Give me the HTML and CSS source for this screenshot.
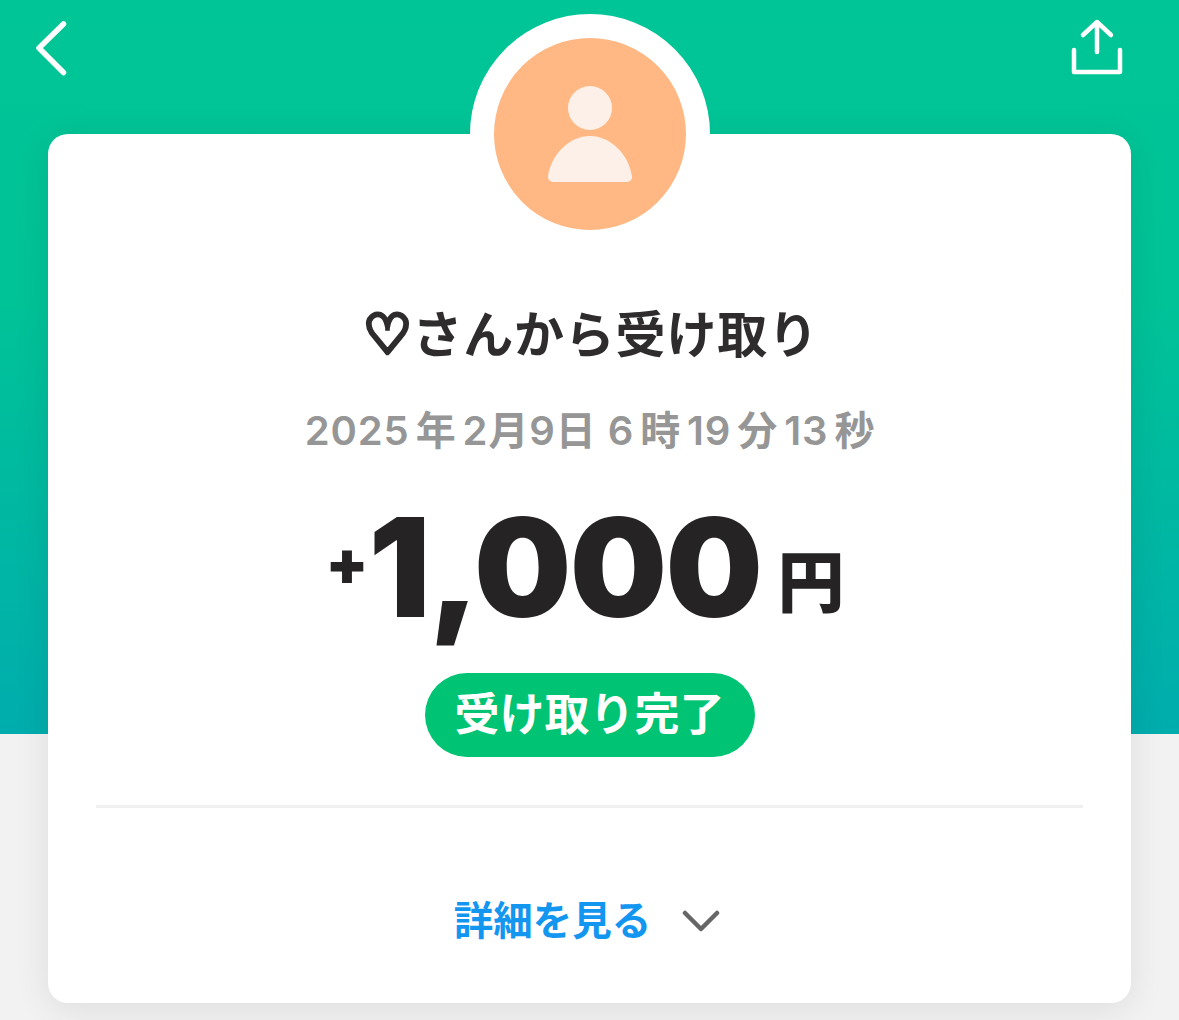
FILE: index.html
```html
<!DOCTYPE html>
<html lang="ja">

<head>
    <meta charset="utf-8">
    <title>受け取り</title>
    <link rel="stylesheet" href="styles.css">
</head>

<body>
    <div class="topbar">
        <svg class="back-icon" viewBox="0 0 36 60">
            <path d="M29.5 6 L5 30 L29.5 54.5" />
        </svg>
        <svg class="share-icon" viewBox="0 0 54 58">
            <path d="M27 34 V4 M13 17 L27 4 L41 17" />
            <path d="M4 32 V54 H50 V32" />
        </svg>
    </div>

    <div class="card">
        <div class="avatar">
            <svg class="avatar-person" viewBox="0 0 192 192">
                <circle cx="96" cy="70" r="22" />
                <path d="M59 144 H133 A5 5 0 0 0 138 138.5 C135 117 117 98 96 98 S57 117 54 138.5 A5 5 0 0 0 59 144 Z" />
            </svg>
        </div>

        <h2 class="title"><span class="heart">♡</span>さんから受け取り</h2>
        <p class="date">2025<span class="unit">年</span>2月9日 6<span class="unit">時</span>19<span class="unit">分</span>13<span class="unit">秒</span></p>

        <div class="amount"><span class="plus">+</span><span class="number">1,000</span><span class="yen">円</span></div>

        <div class="status">受け取り完了</div>
        <div class="divider"></div>

        <div class="details">
            <span class="details-text">詳細を見る</span>
            <svg class="details-icon" viewBox="0 0 38 22">
                <path d="M3 3 L19 19 L35 3" />
            </svg>
        </div>
    </div>
</body>

</html>
```
FILE: styles.css
```css
html,
body {
    margin: 0;
    height: 1020px;
    overflow: hidden;
}

body {
    background-color: #f2f2f2;
    background-image: linear-gradient(#00c596 0, #00c397 40%, #00adad 100%);
    background-size: 100% 734px;
    background-repeat: no-repeat;
    font-family: Inter, "Noto Sans CJK JP", sans-serif;
    color: #252324;
}

.topbar {
    display: flex;
    justify-content: space-between;
    padding: 18px 55px 0 34px;
}

.back-icon {
    width: 36px;
    height: 60px;
}

.share-icon {
    width: 54px;
    height: 58px;
}

.back-icon path,
.share-icon path {
    fill: none;
    stroke: white;
    stroke-linecap: round;
    stroke-linejoin: round;
}

.back-icon path {
    stroke-width: 5.5;
}

.share-icon path {
    stroke-width: 4.5;
}

.card {
    position: relative;
    display: flex;
    flex-direction: column;
    align-items: center;
    box-sizing: border-box;
    width: 1083px;
    height: 869px;
    margin: 56px 0 0 48px;
    padding-top: 171px;
    background-color: white;
    border-radius: 20px;
    box-shadow: 0 6px 36px rgba(0, 0, 0, 0.09);
}

.avatar {
    position: absolute;
    top: -120px;
    left: 422px;
    width: 192px;
    height: 192px;
    background-color: #ffb883;
    border: 24px solid white;
    border-radius: 50%;
}

.avatar-person {
    display: block;
    width: 192px;
    height: 192px;
    fill: #fdf0e8;
}

.title {
    margin: 0;
    padding-left: 3px;
    font-size: 50px;
    line-height: 60px;
    font-weight: 700;
    letter-spacing: 0.8px;
    color: #2e2c2d;
}

.heart {
    font-family: "DejaVu Sans", sans-serif;
    font-size: 54px;
    font-weight: 700;
    line-height: 0;
    -webkit-text-stroke: 4.5px #2e2c2d;
}

.date {
    margin: 41px 0 0;
    padding-left: 7px;
    font-size: 40px;
    line-height: 50px;
    font-weight: 600;
    letter-spacing: 0.9px;
    color: #969696;
}

.unit {
    margin: 0 6px;
}

.amount {
    height: 120px;
    margin-top: 51px;
    padding-right: 9px;
    line-height: 120px;
    white-space: nowrap;
}

.plus {
    font-size: 62px;
    font-weight: 900;
    line-height: 0;
    vertical-align: 32px;
}

.number {
    font-size: 137px;
    font-weight: 900;
    letter-spacing: -1.6px;
}

.yen {
    margin-left: 16px;
    font-size: 67px;
    font-weight: 900;
    line-height: 0;
    vertical-align: 10px;
}

.status {
    box-sizing: border-box;
    width: 330px;
    height: 84px;
    margin-top: 46px;
    background-color: #00c373;
    border-radius: 42px;
    color: white;
    font-size: 45px;
    font-weight: 700;
    line-height: 84px;
    text-align: center;
}

.divider {
    width: 987px;
    height: 3px;
    margin-top: 48px;
    background-color: #f0f0f0;
}

.details {
    display: flex;
    align-items: center;
    gap: 31px;
    margin-top: 88px;
    padding-right: 5px;
}

.details-text {
    font-size: 39.5px;
    line-height: 50px;
    font-weight: 700;
    color: #1296f0;
}

.details-icon {
    width: 38px;
    height: 22px;
    fill: none;
    stroke: #666666;
    stroke-width: 4.5;
    stroke-linecap: round;
    stroke-linejoin: round;
}
```
